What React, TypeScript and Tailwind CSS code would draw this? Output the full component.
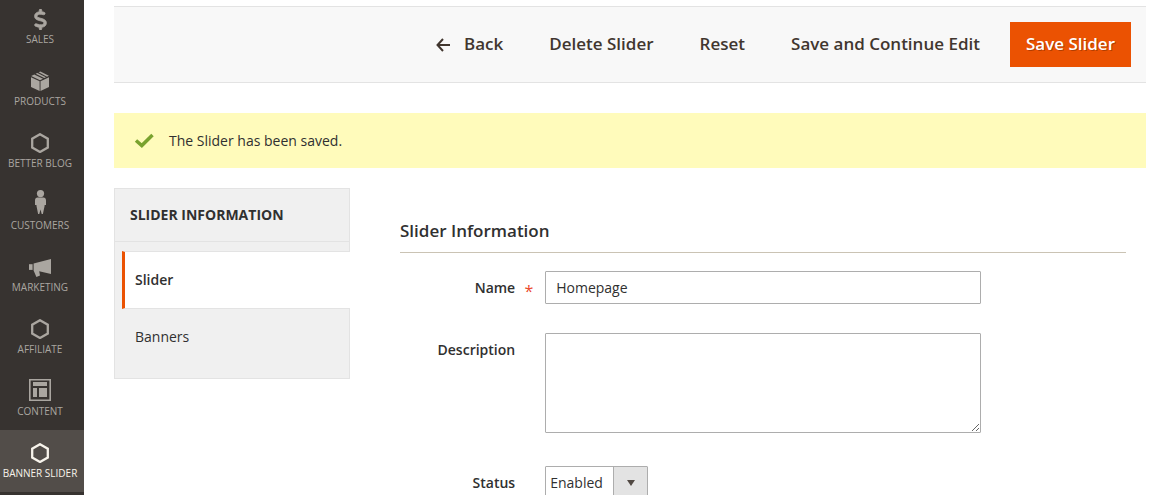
import { ReactNode, useState } from "react";
import { FaDollarSign } from "react-icons/fa6";

const Box = () => (
  <svg width="20" height="20" viewBox="0 0 20 20" fill="currentColor">
    <path d="M1 6.2 9.6 10.3V20L1 15.9Z" />
    <path d="M19 6.2 10.5 10.3V20L19 15.9Z" />
    <path d="M1.2 4.9 4.3 3.4 13 7.7 10 9.2Z" />
    <path d="M5.6 2.8 7.4 1.9 16 6.2 14.2 7.1Z" />
    <path d="M8.6 1.3 10.4 0.5 18.8 4.8 17 5.7Z" />
  </svg>
);

const Hexagon = () => (
  <svg width="20" height="20" viewBox="0 0 20 20" fill="none">
    <path
      d="M10 1.2 17.8 5.7V14.6L10 19 2.2 14.6V5.7Z"
      stroke="currentColor"
      strokeWidth="2.3"
    />
  </svg>
);

const Person = () => (
  <svg width="14" height="30" viewBox="0 0 14 30" fill="currentColor">
    <circle cx="7.5" cy="3.6" r="3.6" />
    <path d="M4.5 7.6H10.5C12 7.6 13 8.8 13 10.5V14.9H11.6V16L9.9 24H8.7L7.5 19.5 6.3 24H5.1L3.5 16V14.9H2V10.5C2 8.8 3 7.6 4.5 7.6Z" />
  </svg>
);

const Megaphone = () => (
  <svg width="22" height="20" viewBox="0 0 22 20" fill="currentColor">
    <path d="M0 7.2H3.6V12.9H0Z" />
    <path d="M4.6 6.6 22 2V17L10.2 14.3 11 18.5 7.4 20 4.6 13.5Z" />
  </svg>
);

const Layout = () => (
  <svg width="22" height="24" viewBox="0 0 22 24" fill="currentColor">
    <path fillRule="evenodd" d="M0 0H22V22H0ZM1.6 1.6V20.4H20.4V1.6Z" />
    <path d="M4 3H18V7H4ZM4 9H8V18H4ZM10 9H18V18H10Z" />
  </svg>
);

const menu: { label: string; icon: ReactNode; active?: boolean }[] = [
  {
    label: "Sales",
    icon: <FaDollarSign size={21} stroke="currentColor" strokeWidth={18} />,
  },
  { label: "Products", icon: <Box /> },
  { label: "Better Blog", icon: <Hexagon /> },
  { label: "Customers", icon: <Person /> },
  { label: "Marketing", icon: <Megaphone /> },
  { label: "Affiliate", icon: <Hexagon /> },
  { label: "Content", icon: <Layout /> },
  { label: "Banner Slider", icon: <Hexagon />, active: true },
];

function Sidebar() {
  return (
    <nav className="w-[84px] shrink-0 bg-[#373330]">
      <ul className="-mt-1">
        {menu.map(({ label, icon, active }) => (
          <li key={label}>
            <a
              href="#"
              className={`flex h-[62px] flex-col items-center gap-0.5 pt-3 pr-1 text-[10px] leading-[14px] whitespace-nowrap uppercase ${
                active ? "bg-[#524d49] text-[#f7f3eb]" : "text-[#aaa6a0]"
              }`}
            >
              <span className="flex h-[22px] items-center">{icon}</span>
              {label}
            </a>
          </li>
        ))}
      </ul>
    </nav>
  );
}

function PageActions() {
  const plain = "flex h-[45px] items-center px-4 text-[#41362f]";
  return (
    <header className="flex justify-end gap-3.5 border-y border-[#e3e3e3] bg-[#f8f8f8] p-[15px] text-[17px] font-semibold">
      <button type="button" className={plain}>
        <svg
          width="14"
          height="14"
          viewBox="0 0 14 14"
          fill="none"
          stroke="currentColor"
          strokeWidth="2"
          className="mr-3.5"
        >
          <path d="M7 1 1.5 7 7 13M1.5 7H14" />
        </svg>
        Back
      </button>
      <button type="button" className={plain}>
        Delete Slider
      </button>
      <button type="button" className={plain}>
        Reset
      </button>
      <button type="button" className={plain}>
        Save and Continue Edit
      </button>
      <button
        type="button"
        className="h-[45px] bg-[#eb5202] px-4 text-white [text-shadow:1px_1px_0_rgba(0,0,0,0.25)]"
      >
        Save Slider
      </button>
    </header>
  );
}

function Tabs() {
  return (
    <aside className="w-[236px] shrink-0">
      <div className="border border-[#e3e3e3] bg-[#f0f0f0]">
        <h2 className="border-b border-[#e3e3e3] px-[15px] py-4 text-sm leading-5 font-bold uppercase">
          Slider Information
        </h2>
        <ul className="pt-[9px] pb-[13px]">
          <li className="-mr-px ml-[7px]">
            <a
              href="#"
              className="flex h-[58px] items-center border-y border-l-3 border-y-[#e3e3e3] border-l-[#eb5202] bg-white pl-2.5 font-semibold"
            >
              Slider
            </a>
          </li>
          <li className="ml-[7px]">
            <a href="#" className="flex h-14 items-center pl-[13px]">
              Banners
            </a>
          </li>
        </ul>
      </div>
    </aside>
  );
}

function Field({
  id,
  label,
  required,
  children,
}: {
  id: string;
  label: string;
  required?: boolean;
  children: ReactNode;
}) {
  return (
    <div className="flex">
      <label
        htmlFor={id}
        className="relative w-1/5 shrink-0 pr-[30px] text-right leading-[33px] font-semibold"
      >
        {label}
        {required && (
          <span className="absolute right-3 text-base leading-10 font-normal text-[#eb4a2e]">
            *
          </span>
        )}
      </label>
      <div className="w-3/5">{children}</div>
    </div>
  );
}

export default function App() {
  const [name, setName] = useState("Homepage");
  const [description, setDescription] = useState("");
  const [status, setStatus] = useState("1");

  return (
    <div className="flex h-screen overflow-hidden bg-white font-['Open_Sans',sans-serif] text-sm text-[#303030]">
      <Sidebar />
      <main className="min-w-0 flex-1 pt-1.5 pr-[25px] pl-[30px]">
        <PageActions />
        <div className="mt-[30px] flex h-[55px] items-center gap-[15px] bg-[#fffbbb] pl-5">
          <svg width="20" height="16" viewBox="0 0 20 16" fill="none">
            <path d="M2 7.5 7.8 12.5 18.5 2" stroke="#79a22e" strokeWidth="3.5" />
          </svg>
          The Slider has been saved.
        </div>
        <div className="mt-5 flex items-start gap-[50px]">
          <Tabs />
          <form
            className="min-w-0 flex-1 pt-[31px] pr-5"
            onSubmit={(e) => e.preventDefault()}
          >
            <h1 className="border-b border-[#cac3b4] pb-[9px] text-[17px] leading-6 font-semibold">
              Slider Information
            </h1>
            <div className="mt-[18px] flex flex-col gap-[29px]">
              <Field id="name" label="Name" required>
                <input
                  id="name"
                  value={name}
                  onChange={(e) => setName(e.target.value)}
                  className="block h-[33px] w-full rounded-[1px] border border-[#adadad] px-2.5"
                />
              </Field>
              <Field id="description" label="Description">
                <textarea
                  id="description"
                  value={description}
                  onChange={(e) => setDescription(e.target.value)}
                  className="mb-1 block h-[100px] w-full rounded-[1px] border border-[#adadad] px-2.5"
                />
              </Field>
              <Field id="status" label="Status">
                <div className="relative w-[103px]">
                  <select
                    id="status"
                    value={status}
                    onChange={(e) => setStatus(e.target.value)}
                    className="block h-[33px] w-full appearance-none rounded-[1px] border border-[#adadad] bg-white pl-1"
                  >
                    <option value="1">Enabled</option>
                    <option value="0">Disabled</option>
                  </select>
                  <span className="pointer-events-none absolute inset-y-px right-px flex w-[34px] items-center justify-center border-l border-[#adadad] bg-[#e3e3e3]">
                    <svg width="8" height="6" viewBox="0 0 8 6" fill="#514943">
                      <path d="M0 0H8L4 6Z" />
                    </svg>
                  </span>
                </div>
              </Field>
            </div>
          </form>
        </div>
      </main>
    </div>
  );
}
